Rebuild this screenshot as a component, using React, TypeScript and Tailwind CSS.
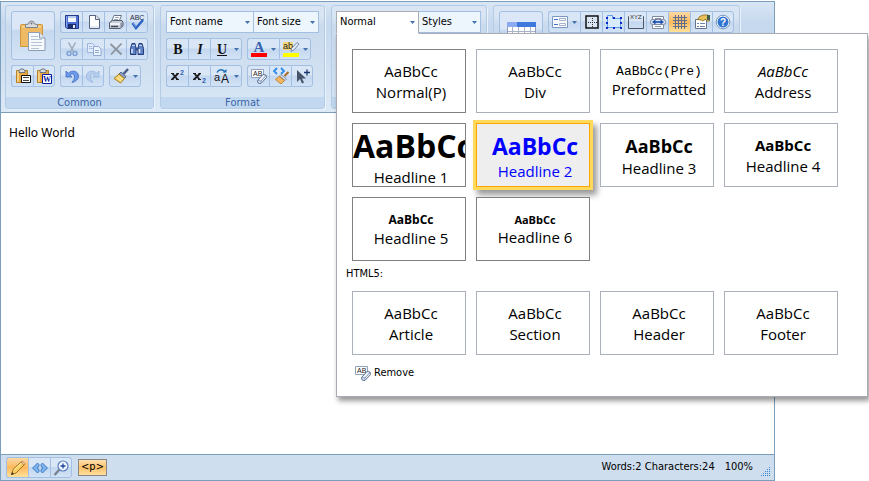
import type { ReactNode } from "react";
import { clsx } from "clsx";

const UI = "font-['DejaVu_Sans_Condensed','Noto_Sans',sans-serif]";
const SERIF = "font-['Liberation_Serif',serif]";
const SANS = "font-['Liberation_Sans',sans-serif]";

function Icon({ children, size = 16, className }: { children: ReactNode; size?: number; className?: string }) {
  return (
    <svg width={size} height={size} viewBox={`0 0 ${size} ${size}`} aria-hidden="true" className={clsx("shrink-0 overflow-visible", className)}>
      {children}
    </svg>
  );
}

function Arrow({ className }: { className?: string }) {
  return (
    <svg width="5" height="3" viewBox="0 0 5 3" aria-hidden="true" className={clsx("shrink-0", className)}>
      <path d="M0 0h5L2.5 3z" fill="#4271ad" />
    </svg>
  );
}

const FloppyIcon = () => (
  <Icon>
    <path d="M1.5 1.5h13v13h-11.500l-1.500-1.500z" fill="#4a6fd0" stroke="#24388c" />
    <path d="M4 2h8v6H4z" fill="#f4f8ff" />
    <path d="M4 2h8v2H4z" fill="#b8ccf0" />
    <path d="M4 10h8v5H4z" fill="#1d2f6f" />
    <path d="M9 11h2v3H9z" fill="#e8eefc" />
    <path d="M2 2h1v11H2z" fill="#8aa6ee" />
  </Icon>
);
const PageIcon = () => (
  <Icon>
    <path d="M3.500 1.500h6.500l3.500 3.500v9.500h-10z" fill="#fff" stroke="#56647e" />
    <path d="M9.500 1.500v4h4" fill="#dfe7f2" stroke="#56647e" />
    <path d="M4 12h9v2H4z" fill="#e4ebf5" />
  </Icon>
);
const PrinterIcon = () => (
  <Icon>
    <path d="M6 1.500h7.500L11 7.500H3.500z" fill="#fff" stroke="#68758a" />
    <path d="M7 3.500h4M6 5.500h4" stroke="#9aa7ba" />
    <path d="M1.500 8.500l3-2h9.500l1 2v3.500l-3 2.500H1.500z" fill="#c8ced8" stroke="#555f70" />
    <path d="M2 9h10v2H2z" fill="#eef1f6" />
    <path d="M3 12.500h7" stroke="#444e5f" strokeWidth="1.500" />
    <path d="M12.500 9v5l2-2V8z" fill="#8590a2" />
  </Icon>
);
const SpellIcon = () => (
  <Icon>
    <text x="1" y="6" fontSize="7" className={SANS} fill="#222c3e">ABC</text>
    <path d="M3.500 9l3.500 5L14 6" fill="none" stroke="#2c62c4" strokeWidth="2.500" />
    <path d="M4 9l3 4" stroke="#7ca4ea" />
  </Icon>
);
const CutIcon = () => (
  <Icon>
    <path d="M4.500 1.500l5 9M11.500 1.500l-5 9" stroke="#9ea9b8" strokeWidth="1.500" />
    <circle cx="5" cy="12.500" r="2" fill="none" stroke="#7fa0d4" strokeWidth="1.500" />
    <circle cx="11" cy="12.500" r="2" fill="none" stroke="#7fa0d4" strokeWidth="1.500" />
  </Icon>
);
const CopyIcon = () => (
  <Icon>
    <path d="M1.500 2.500h5l2.500 2.500v6.500H1.500z" fill="#dfeafa" stroke="#9fb4d8" />
    <path d="M3 5.500h3M3 7.500h4" stroke="#a9bfe3" />
    <path d="M7.500 5.500h5l2.500 2.500v6.500H7.500z" fill="#eef4fd" stroke="#8fa8d2" />
    <path d="M9 9.500h4M9 11.500h4" stroke="#8fa8d2" />
  </Icon>
);
const DeleteIcon = () => (
  <Icon>
    <path d="M2.500 3l11 10.500M13.500 2.500L3 13.500" stroke="#8c939d" strokeWidth="1.800" />
  </Icon>
);
const FindIcon = () => (
  <Icon>
    <path d="M3 2.500h3l1 5v6H1.500v-6zM10 2.500h3l1.500 5v6H9v-6z" fill="#5d82c8" stroke="#243c7a" />
    <path d="M6.500 6.500h3v3h-3z" fill="#334f90" />
    <path d="M3 8v4M10.500 8v4" stroke="#e2ecff" strokeWidth="1.500" />
    <path d="M3 4.500h3M10 4.500h3" stroke="#bfd0f4" />
  </Icon>
);
const Board = () => (
  <>
    <path d="M1.500 2.500h11v12h-11z" fill="#e9a93f" stroke="#b68127" />
    <path d="M2 3h2v11H2z" fill="#f6cf83" />
    <path d="M4 4.500V2.500L6 1h2l2 1.500v2z" fill="#d8dce2" stroke="#6c7380" />
  </>
);
const PasteTextIcon = () => (
  <Icon>
    <Board />
    <path d="M6.500 7.500h9v7h-9z" fill="#fff" stroke="#111" />
    <path d="M8 9.500h6M8 12.500h6" stroke="#444" />
  </Icon>
);
const PasteWordIcon = () => (
  <Icon>
    <Board />
    <path d="M6.500 6.500h9v9h-9z" fill="#fff" stroke="#0b1c9c" />
    <text x="11" y="14" textAnchor="middle" fontSize="8" fontWeight="700" className={SERIF} fill="#0b1c9c">W</text>
  </Icon>
);
const UndoIcon = ({ faded = false }: { faded?: boolean }) => (
  <Icon className={faded ? "-scale-x-100" : undefined}>
    <path d="M2 3v6h6L5.800 7c2.500-2 4.700-1 4.700 2 0 2-1 3.500-2.500 5.500 4-1 6.500-3.500 6.500-6.500C14.500 3 8 1.500 4.200 5.200z" fill={faded ? "#b7cdee" : "#6d9aea"} stroke={faded ? "#98b4de" : "#3f6cc0"} strokeWidth=".8" />
  </Icon>
);
const BrushIcon = () => (
  <Icon>
    <path d="M15 1l-4.500 5" stroke="#4a5d88" strokeWidth="2.500" />
    <path d="M8 4l5 4.500-1.500 2L6 6z" fill="#8ba0c8" stroke="#52658f" />
    <path d="M6 6l5.500 4.500-4 4.500L1 10.500z" fill="#f3d06a" stroke="#a97b1d" />
    <path d="M4 10l4 3M6 8.500l3.500 3" stroke="#fff0b0" />
  </Icon>
);
const ClipboardIcon = () => (
  <Icon size={32}>
    <path d="M3.500 5.500q0-1 1-1h20q1 0 1 1v21h-22z" fill="#eebb64" stroke="#cf963c" />
    <path d="M5 6h19v1.500H5z" fill="#f8d791" />
    <path d="M8.500 7.500V4.500l3-.500q.5-3 3-3t3 3l3 .5v3z" fill="#d9dbdf" stroke="#7d828a" />
    <circle cx="14.500" cy="3.500" r="1" fill="#676d78" />
    <path d="M11.500 12.500h11l5.500 5.500v12.500H11.500z" fill="#f7fafd" stroke="#8c9db5" />
    <path d="M22.500 12.500v5.500H28" fill="#dfe7f2" stroke="#8c9db5" />
    <path d="M14 16.500h7M14 19.500h11M14 22.500h11M14 25.500h11M14 28.500h8" stroke="#b6c2d4" />
  </Icon>
);
const Glyph = ({ kind }: { kind: "B" | "I" | "U" }) => (
  <Icon>
    <text x="8" y="13" textAnchor="middle" fontSize="14" fontWeight="700" fontStyle={kind === "I" ? "italic" : "normal"} className={SERIF} fill="#111">{kind}</text>
    {kind === "U" && <path d="M3 14.500h10" stroke="#111" />}
  </Icon>
);
const ScriptIcon = ({ low = false }: { low?: boolean }) => (
  <Icon>
    <path d="M2.500 5.500l5 6M8 5.500l-6 6" stroke="#1d1d1d" strokeWidth="1.800" />
    <path d="M1 5.500h3M6.500 5.500h2.500M1 11.500h2.500M6 11.500h3" stroke="#1d1d1d" />
    <text x="10" y={low ? 15 : 7} fontSize="7" fontWeight="700" className={SANS} fill="#2d5db4">2</text>
  </Icon>
);
const CaseIcon = () => (
  <Icon>
    <text x="0" y="13" fontSize="11" className={SANS} fill="#111">a</text>
    <text x="7" y="15" fontSize="12" className={SANS} fill="#111">A</text>
    <path d="M3 4.500C5 1 9 1 11 4" fill="none" stroke="#1c6fb8" strokeWidth="1.500" />
    <path d="M8.500 4.500h4V1z" fill="#1c6fb8" />
  </Icon>
);
const FontColorIcon = () => (
  <Icon>
    <text x="8" y="11" textAnchor="middle" fontSize="15" fontWeight="700" className={SERIF} fill="#3a62ad">A</text>
    <path d="M0 12h16v4H0z" fill="#f00" />
  </Icon>
);
const HighlightIcon = () => (
  <Icon>
    <path d="M0 1h10v8H0z" fill="#f5d67a" />
    <text x="0" y="8" fontSize="9" className={SANS} fill="#222">ab</text>
    <path d="M14 1.500l2 1.500-5 6-3 1.500.5-3z" fill="#e3ebf8" stroke="#5b7198" strokeWidth=".8" />
    <path d="M0 12h16v4H0z" fill="#ff0" />
  </Icon>
);
const EraseIcon = () => (
  <Icon>
    <path d="M.5 1.500h12v8H.5z" fill="#fff" stroke="#8fa3c0" />
    <text x="2" y="8" fontSize="7" className={SANS} fill="#222">AB</text>
    <path d="M12 6.500l3 .5.500 2.500-5.500 6-3-.5-.5-2.500z" fill="#eef3fb" stroke="#5b6f92" />
    <path d="M7 12.500l3 .5 5-5.500M10 13v2" fill="none" stroke="#8497b8" />
  </Icon>
);
const CleanCodeIcon = () => (
  <Icon>
    <path d="M4 0L1 3l3 3M8 0l3 3-3 3" fill="none" stroke="#2f8be6" strokeWidth="1.800" />
    <path d="M15.500 4l-4 4" stroke="#a86a26" strokeWidth="2" />
    <path d="M8 6.500l5.500 4.500-1.500 1.500L6.500 8z" fill="#d2d8e4" stroke="#7b879c" strokeWidth=".8" />
    <path d="M6 8.500l5.500 4L8 16l-5.500-4.500z" fill="#f4b860" stroke="#b57421" strokeWidth=".8" />
  </Icon>
);
const PickIcon = () => (
  <Icon>
    <path d="M3 2v12l3-3 2 4.500 2-1-2-4h4z" fill="#46546b" />
    <path d="M10 4.500h6M13 1.500v6" stroke="#19376f" strokeWidth="1.300" />
  </Icon>
);
const TableIcon = () => (
  <Icon size={32}>
    <path d="M2.500 3.500h28v25h-28z" fill="#fff" stroke="#8e9cba" />
    <path d="M2 2h29v5H2z" fill="#3f78dc" />
    <path d="M2 2h10v5H2z" fill="#8cabf2" />
    <path d="M7.500 7v21M13.500 7v21M19.500 7v21M25.500 7v21M3 11.500h27M3 17.500h27" stroke="#a9b4c8" />
  </Icon>
);
const FormIcon = () => (
  <Icon>
    <path d="M.5 2.500h15v11H.5z" fill="#f7faff" stroke="#7d98c4" />
    <path d="M2 5.500h4M2 10.500h4" stroke="#4472c4" />
    <path d="M7.500 4.500h6v2h-6zM7.500 9.500h6v2h-6z" fill="#fff" stroke="#a5b3cb" />
  </Icon>
);
const BorderIcon = () => (
  <Icon>
    <path d="M2 2h12v12H2z" fill="#dbe6f5" stroke="#111" strokeWidth="1.500" />
    <path d="M8.500 4v9M4 8.500h9" stroke="#333" strokeDasharray="1 1" />
  </Icon>
);
const LayerIcon = () => (
  <Icon>
    <path d="M1.500 4.500v-3h5v3h8v9h-13z" fill="#d9ecff" stroke="#5ba0e8" />
    <path d="M0 3h2v2H0zM7 3h2v2H7zM14 3h2v2h-2zM0 8h2v2H0zM14 8h2v2h-2zM0 13h2v2H0zM7 13h2v2H7zM14 13h2v2h-2z" fill="#1128c8" />
  </Icon>
);
const XyzIcon = () => (
  <Icon>
    <path d="M1 2.500H.5v12h15v-12H15" fill="none" stroke="#4d5666" />
    <text x="2" y="5" fontSize="6" className={SANS} fill="#333">XYZ</text>
  </Icon>
);
const BreakIcon = () => (
  <Icon>
    <path d="M2.500 5V2.500h11V5M2.500 11v3.500h11V11" fill="#fff" stroke="#808ba0" />
    <rect x=".5" y="5.500" width="15" height="5" rx="2" fill="#d7e4f8" stroke="#808ba0" />
    <path d="M5 7h6v2H5z" fill="#3c68b8" />
    <path d="M5.500 5.500v5L2 8zM10.500 5.500v5L14 8z" fill="#1f4ea8" />
    <path d="M5 4.500h6M5 12.500h6" stroke="#8793a8" />
  </Icon>
);
const GridIcon = () => (
  <Icon>
    <path d="M3.500 1v14M6.500 1v14M9.500 1v14M12.500 1v14M1 3.500h14M1 6.500h14M1 9.500h14M1 12.500h14" stroke="#5f6f92" />
  </Icon>
);
const PropertiesIcon = () => (
  <Icon>
    <path d="M1.500 5.500h11v9h-11z" fill="#fff" stroke="#65728a" />
    <path d="M3 9.500h2M6 9.500h5M3 12.500h2M6 12.500h5" stroke="#6f87b0" />
    <path d="M3.500 5.500l2-3 4-1.500h4l2 1v5h-2l-2-1.500-3 1.500-1-1z" fill="#e8c15a" stroke="#8c6a1c" strokeWidth=".8" />
    <path d="M13 1h3v5h-3z" fill="#3f5f4c" />
  </Icon>
);
const HelpIcon = () => (
  <Icon>
    <circle cx="8" cy="8" r="6.800" fill="#fff" stroke="#7794bd" />
    <circle cx="8" cy="8" r="5.500" fill="#2f74d0" />
    <text x="8" y="12" textAnchor="middle" fontSize="10" fontWeight="700" className={SANS} fill="#fff">?</text>
  </Icon>
);
const PencilIcon = () => (
  <Icon>
    <path d="M1.500 14.500l1.500-5 8.500-8 3 3-8.500 8.500z" fill="#f8cf5e" stroke="#a86f1c" />
    <path d="M4 10l8-7.500" stroke="#fff2b8" />
    <path d="M11 2l1.500-1 2.500 2.500-1.500 1.500z" fill="#efc0a8" stroke="#a86f1c" strokeWidth=".6" />
    <path d="M1 15l1-3 2 2z" fill="#333" />
  </Icon>
);
const CodeIcon = () => (
  <Icon>
    <path d="M7 4.500v2L5.200 8 7 9.500v2L5.500 13 .5 8l5-5zM9 4.500v2L10.800 8 9 9.500v2l1.500 1.500 5-5-5-5z" fill="#7ab2f0" stroke="#2f6cba" strokeWidth=".8" />
  </Icon>
);
const ZoomIcon = () => (
  <Icon>
    <path d="M7 9l-5.500 6" stroke="#7a8496" strokeWidth="2.500" />
    <circle cx="10" cy="6" r="5" fill="#f0f7ff" stroke="#5b7fc0" strokeWidth="1.200" />
    <path d="M7.500 6h5M10 3.500v5" stroke="#1d46a0" strokeWidth="1.300" />
  </Icon>
);
const GripIcon = () => (
  <Icon size={10}>
    {[[8, 0], [6, 2], [8, 2], [4, 4], [6, 4], [8, 4], [2, 6], [4, 6], [6, 6], [8, 6], [0, 8], [2, 8], [4, 8], [6, 8], [8, 8]].map(([x, y]) => (
      <rect key={`${x}-${y}`} x={x} y={y} width="1" height="1" fill="#2f86dc" />
    ))}
  </Icon>
);

type ToolProps = { label: string; children: ReactNode; menu?: boolean; active?: boolean; short?: boolean };

function Tool({ label, children, menu = false, active = false, short = false }: ToolProps) {
  return (
    <button
      type="button"
      aria-label={label}
      className={clsx(
        "flex items-center justify-center border-y border-l border-[#a3bfe2] first:rounded-l-[3px] last:rounded-r-[3px] last:border-r",
        short ? "h-[21px]" : "h-[22px]",
        menu ? "w-8 gap-1" : "w-[22px]",
        active
          ? "bg-linear-to-b from-[#fbd9a5] via-[#fdb95c] to-[#fee29a]"
          : "bg-linear-to-b from-[#d9e6f5] from-45% via-[#c3d7ef] via-50% to-[#d3e3f6]",
      )}
    >
      {children}
      {menu && <Arrow />}
    </button>
  );
}

function BigTool({ label, children }: { label: string; children: ReactNode }) {
  return (
    <button type="button" aria-label={label} className="flex h-[49px] w-11 items-center justify-center rounded-[3px] border border-[#a3bfe2] bg-linear-to-b from-[#dbe7f6] from-35% via-[#c5d8ef] via-40% to-[#d5e4f6]">
      {children}
    </button>
  );
}

const Bar = ({ children }: { children: ReactNode }) => <div className="flex">{children}</div>;

function Group({ title, children }: { title?: string; children: ReactNode }) {
  return (
    <section className="flex flex-col rounded-[3px] border border-[#b4cbe6] bg-linear-to-b from-[#d9e5f3] from-10% via-[#c9daed] via-20% to-[#d8e6f5] shadow-[1px_1px_0_#eaf2fb]">
      <div className="flex grow flex-col gap-[5px] px-[5px] pt-[5px] pb-[10px]">{children}</div>
      <h2 className="h-[11px] bg-[#c1d8f0] text-center text-[11px] leading-[11px] text-[#3b66a6]">{title}</h2>
    </section>
  );
}

function Picker({ label, className, open = false }: { label: string; className: string; open?: boolean }) {
  return (
    <div className={clsx("relative", className)}>
      <select
        aria-label={label}
        className={clsx(
          "block w-full appearance-none border pl-[3px] text-[11px] text-black outline-none",
          open ? "relative z-20 h-[23px] border-[#a9acb5] border-b-white bg-white" : "h-[22px] border-[#a3bfe2] bg-[#edf5fd]",
        )}
      >
        <option>{label}</option>
      </select>
      <Arrow className="pointer-events-none absolute top-[10px] right-1 z-20" />
    </div>
  );
}

type Style = { name: string; sample?: string; sampleClass?: string; dark?: boolean; selected?: boolean };

const blockStyles: Style[] = [
  { name: "Normal(P)", dark: true },
  { name: "Div" },
  { name: "Preformatted", sample: "AaBbCc(Pre)", sampleClass: "font-['Liberation_Mono',monospace] text-[13px] leading-[14px]" },
  { name: "Address", sampleClass: "text-[15px] leading-[21px] italic" },
  { name: "Headline 1", sampleClass: "-ml-1 text-[32px] leading-[42px] font-bold", dark: true },
  { name: "Headline 2", sampleClass: "text-[23px] leading-[30px] font-bold", selected: true },
  { name: "Headline 3", sampleClass: "text-[18px] leading-6 font-bold" },
  { name: "Headline 4", sampleClass: "text-[15px] leading-[21px] font-bold" },
  { name: "Headline 5", sampleClass: "text-[12px] leading-4 font-bold", dark: true },
  { name: "Headline 6", sampleClass: "text-[11px] leading-[14px] font-bold", dark: true },
];

const html5Styles: Style[] = [{ name: "Article" }, { name: "Section" }, { name: "Header" }, { name: "Footer" }];

function Tile({ name, sample = "AaBbCc", sampleClass = "text-[15px] leading-[21px]", dark, selected }: Style) {
  return (
    <button
      type="button"
      aria-pressed={Boolean(selected)}
      className={clsx(
        "flex h-16 flex-col justify-center overflow-hidden border pt-[2px] pl-1 text-center font-['Open_Sans','Noto_Sans',sans-serif] whitespace-nowrap",
        selected
          ? "border-[#ffa500] bg-[#eeeeee] text-[#0000ff] shadow-[0_0_0_3px_#ffd95c,4px_5px_6px_3px_rgba(0,0,0,0.4)]"
          : "bg-white text-black",
        !selected && (dark ? "border-[#808080]" : "border-[#aab0ba]"),
      )}
    >
      <span className={clsx("block w-full", sampleClass)}>{sample}</span>
      <span className="block w-full text-[15px] leading-[21px]">{name}</span>
    </button>
  );
}

function StyleMenu() {
  return (
    <div className="absolute top-full left-0 z-10 w-[532px] border border-[#a9acb5] bg-white p-[15px] shadow-[2px_4px_5px_rgba(0,0,0,0.4)]">
      <div className="grid grid-cols-[repeat(4,114px)] gap-[10px]">
        {blockStyles.map((s) => (
          <Tile key={s.name} {...s} />
        ))}
      </div>
      <h3 className="-ml-[6px] pt-[5px] pb-[9px] text-[11px] leading-4 text-black">HTML5:</h3>
      <div className="grid grid-cols-[repeat(4,114px)] gap-[10px]">
        {html5Styles.map((s) => (
          <Tile key={s.name} {...s} />
        ))}
      </div>
      <button type="button" className="mt-[10px] flex items-center gap-[3px] px-[3px] text-[11px] leading-4 text-black">
        <EraseIcon />
        Remove
      </button>
    </div>
  );
}

function Toolbar() {
  return (
    <header className="flex gap-[6px] border-b border-[#7b9ebd] bg-linear-to-b from-[#d9e6f4] via-[#c5d8ee] via-20% to-[#dce9f7] px-1 py-[3px]">
      <Group title="Common">
        <div className="flex gap-[5px]">
          <BigTool label="Paste"><ClipboardIcon /></BigTool>
          <div className="flex flex-col gap-[5px]">
            <Bar>
              <Tool label="Save"><FloppyIcon /></Tool>
              <Tool label="New"><PageIcon /></Tool>
              <Tool label="Print"><PrinterIcon /></Tool>
              <Tool label="Spell check"><SpellIcon /></Tool>
            </Bar>
            <Bar>
              <Tool label="Cut"><CutIcon /></Tool>
              <Tool label="Copy"><CopyIcon /></Tool>
              <Tool label="Delete"><DeleteIcon /></Tool>
              <Tool label="Find"><FindIcon /></Tool>
            </Bar>
          </div>
        </div>
        <div className="flex gap-[5px]">
          <Bar>
            <Tool label="Paste text"><PasteTextIcon /></Tool>
            <Tool label="Paste from Word"><PasteWordIcon /></Tool>
          </Bar>
          <Bar>
            <Tool label="Undo"><UndoIcon /></Tool>
            <Tool label="Redo"><UndoIcon faded /></Tool>
          </Bar>
          <Bar>
            <Tool label="Format painter" menu><BrushIcon /></Tool>
          </Bar>
        </div>
      </Group>

      <Group title="Format">
        <div className="flex">
          <Picker label="Font name" className="w-[88px]" />
          <Picker label="Font size" className="-ml-px w-[66px]" />
        </div>
        <div className="flex gap-[5px]">
          <Bar>
            <Tool label="Bold"><Glyph kind="B" /></Tool>
            <Tool label="Italic"><Glyph kind="I" /></Tool>
            <Tool label="Underline" menu><Glyph kind="U" /></Tool>
          </Bar>
          <Bar>
            <Tool label="Font color" menu><FontColorIcon /></Tool>
            <Tool label="Highlight" menu><HighlightIcon /></Tool>
          </Bar>
        </div>
        <div className="flex gap-[5px]">
          <Bar>
            <Tool label="Superscript"><ScriptIcon /></Tool>
            <Tool label="Subscript"><ScriptIcon low /></Tool>
            <Tool label="Change case" menu><CaseIcon /></Tool>
          </Bar>
          <Bar>
            <Tool label="Remove format"><EraseIcon /></Tool>
            <Tool label="Clean code"><CleanCodeIcon /></Tool>
            <Tool label="Select"><PickIcon /></Tool>
          </Bar>
        </div>
      </Group>

      <Group>
        <div className="-ml-px flex">
          <div className="relative h-[22px]">
            <Picker label="Normal" className="w-[83px]" open />
            <StyleMenu />
          </div>
          <Picker label="Styles" className="-ml-px w-[63px]" />
        </div>
      </Group>

      <Group>
        <div className="flex gap-[5px]">
          <BigTool label="Table"><TableIcon /></BigTool>
          <Bar>
            <Tool label="Form" menu><FormIcon /></Tool>
            <Tool label="Borders"><BorderIcon /></Tool>
            <Tool label="Layer"><LayerIcon /></Tool>
            <Tool label="Field set"><XyzIcon /></Tool>
            <Tool label="Page break"><BreakIcon /></Tool>
            <Tool label="Grid" active><GridIcon /></Tool>
            <Tool label="Properties"><PropertiesIcon /></Tool>
            <Tool label="Help"><HelpIcon /></Tool>
          </Bar>
        </div>
      </Group>
    </header>
  );
}

function StatusBar() {
  return (
    <footer className="flex h-[26px] items-center border-t border-[#7b9ebd] bg-[#cfdeee] pr-[3px] pl-[5px] text-[11px] text-black">
      <Bar>
        <Tool label="Design" active short><PencilIcon /></Tool>
        <Tool label="Source" short><CodeIcon /></Tool>
        <Tool label="Preview" short><ZoomIcon /></Tool>
      </Bar>
      <button type="button" className="ml-[6px] flex h-[17px] w-[29px] items-center justify-center border border-[#868686] bg-linear-to-b from-[#fde0ae] via-[#fdc06a] to-[#fee09a]">
        &lt;p&gt;
      </button>
      <span className="ml-auto">Words:2 Characters:24</span>
      <span className="ml-[10px]">100%</span>
      <span className="ml-2 self-end pb-[3px]"><GripIcon /></span>
    </footer>
  );
}

export default function App() {
  return (
    <div className={clsx("h-screen bg-white pt-px pr-[94px]", UI)}>
      <div className="flex h-full flex-col border border-[#7b9ebd]">
        <Toolbar />
        <textarea
          aria-label="Document"
          defaultValue="Hello World"
          className="grow resize-none bg-white px-2 py-3 font-['Noto_Sans',sans-serif] text-[12px] leading-4 text-black outline-none"
        />
        <StatusBar />
      </div>
    </div>
  );
}
